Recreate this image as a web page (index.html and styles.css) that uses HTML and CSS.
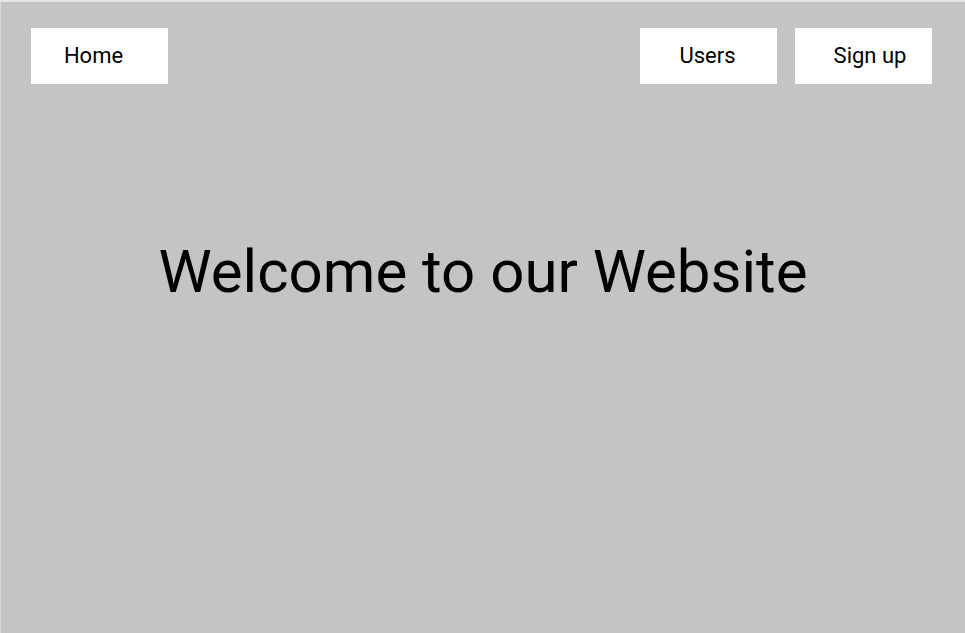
FILE: index.html
```html
<!DOCTYPE html>
<html>
<head>
<meta charset="utf-8">
<link rel="stylesheet" href="styles.css">
</head>
<body>
<div class="page">
  <nav class="nav">
    <a class="btn btn-home">Home</a>
    <div class="nav-right">
      <a class="btn btn-users">Users</a>
      <a class="btn btn-signup">Sign up</a>
    </div>
  </nav>
  <h1 class="title">Welcome to our Website</h1>
</div>
</body>
</html>
```
FILE: styles.css
```css
html, body {
  margin: 0;
  padding: 0;
  height: 100%;
}
body {
  font-family: Roboto, "Liberation Sans", sans-serif;
  background: #c4c4c4;
}
.page {
  box-sizing: border-box;
  height: 633px;
  background: #c4c4c4;
  border-top: 2px solid #e4e4e4;
  border-left: 1px solid #d8d8d8;
}
.nav {
  display: flex;
  justify-content: space-between;
  padding: 26px 33px 0 30px;
}
.nav-right {
  display: flex;
  gap: 18px;
}
.btn {
  box-sizing: border-box;
  width: 137px;
  height: 56px;
  padding-bottom: 2px;
  background: #ffffff;
  display: flex;
  align-items: center;
  justify-content: center;
  font-size: 22px;
  color: #000;
  text-decoration: none;
}
.btn-home {
  padding-right: 12px;
}
.btn-users {
  padding-right: 2px;
}
.btn-signup {
  padding-left: 13px;
}
.title {
  margin: 150px 0 0 0;
  text-align: center;
  font-weight: 400;
  font-size: 60px;
  line-height: 75px;
  color: #000;
}
```
